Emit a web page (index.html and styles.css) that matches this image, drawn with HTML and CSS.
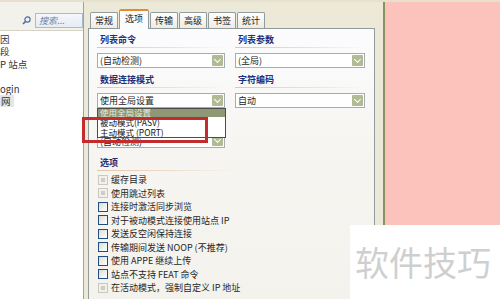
FILE: index.html
```html
<!DOCTYPE html>
<html>
<head>
<meta charset="utf-8">
<link rel="stylesheet" href="styles.css">
</head>
<body>
<div class="screen">
  <aside class="left">
    <div class="searchbar">
      <svg class="mag" width="9" height="9" viewBox="0 0 9 9"><circle cx="5.5" cy="3.5" r="2.6" fill="none" stroke="#4a6fa8" stroke-width="1.2"/><path d="M3.6 5.4 L1 8" stroke="#4a6fa8" stroke-width="1.6"/></svg>
      <div class="search">搜索...</div>
    </div>
    <ul class="tree">
      <li>因</li>
      <li>段</li>
      <li>P 站点</li>
      <li></li>
      <li>ogin</li>
      <li><span class="sel">网</span></li>
    </ul>
  </aside>
  <div class="split"></div>
  <main class="main">
    <div class="tabs">
      <div class="tab">常规</div>
      <div class="tab active">选项</div>
      <div class="tab">传输</div>
      <div class="tab">高级</div>
      <div class="tab">书签</div>
      <div class="tab">统计</div>
    </div>
    <div class="panel">
      <div class="grid">
        <div class="field">
          <h3>列表命令</h3>
          <div class="select">(自动检测)<span class="arrow"></span></div>
        </div>
        <div class="field">
          <h3>列表参数</h3>
          <div class="select">(全局)<span class="arrow"></span></div>
        </div>
        <div class="field">
          <h3>数据连接模式</h3>
          <div class="select">使用全局设置<span class="arrow"></span>
            <div class="droplist">
              <div class="opt hi">使用全局设置</div>
              <div class="opt">被动模式(PASV)</div>
              <div class="opt">主动模式 (PORT)</div>
            </div>
          </div>
        </div>
        <div class="field">
          <h3>字符编码</h3>
          <div class="select">自动<span class="arrow"></span></div>
        </div>
        <div class="field">
          <h3></h3>
          <div class="select low">(自动检测)<span class="arrow"></span></div>
        </div>
      </div>
      <h3 class="opts-title">选项</h3>
      <ul class="checks">
        <li class="dis"><span class="cb"></span>缓存目录</li>
        <li class="dis"><span class="cb"></span>使用跳过列表</li>
        <li><span class="cb"></span>连接时激活同步浏览</li>
        <li><span class="cb"></span>对于被动模式连接使用站点 IP</li>
        <li><span class="cb"></span>发送反空闲保持连接</li>
        <li><span class="cb"></span>传输期间发送 NOOP (不推荐)</li>
        <li><span class="cb"></span>使用 APPE 继续上传</li>
        <li><span class="cb"></span>站点不支持 FEAT 命令</li>
        <li class="dis"><span class="cb"></span>在活动模式，强制自定义 IP 地址</li>
      </ul>
    </div>
  </main>
  <div class="gap"></div>
  <div class="frame"></div>
  <div class="pink"></div>
</div>
<div class="annot"></div>
<div class="watermark">软件技巧</div>
</body>
</html>
```
FILE: styles.css
```css
* { box-sizing: border-box; }
html, body { margin: 0; padding: 0; }
body {
  width: 500px;
  height: 299px;
  overflow: hidden;
  position: relative;
  background: #fcc3bd;
  font-family: "Noto Sans CJK SC", "Liberation Sans", sans-serif;
  font-size: 9px;
  color: #222;
}
ul { list-style: none; margin: 0; padding: 0; }
h3 { margin: 0; }

.screen {
  display: flex;
  height: 299px;
  border-top: 2px solid #e7e0cc;
}

/* left pane */
.left {
  width: 84px;
  background: #fff;
  border-right: 1px solid #9aa3a6;
  overflow: hidden;
}
.searchbar {
  height: 29px;
  background: #f2f1ec;
  border-bottom: 1px solid #d6d3c6;
  display: flex;
  align-items: flex-start;
  padding-top: 11px;
  padding-left: 22px;
  gap: 4px;
}
.mag { margin-top: 3px; }
.search {
  width: 48px;
  height: 15px;
  border: 1px solid #a9bbd0;
  background: linear-gradient(#f4f7fb, #e6ecf3);
  color: #6a7ea0;
  font-style: italic;
  line-height: 13px;
  padding-left: 3px;
}
.tree { padding-top: 2px; }
.tree li {
  height: 12.4px;
  line-height: 12px;
  white-space: nowrap;
  font-size: 9.5px;
  color: #333;
}
.tree .sel { background: #e6e6e6; padding: 0 3px 0 1px; display: inline-block; line-height: 12px; }

.split { width: 4px; background: #ece9d8; }

/* main */
.main {
  width: 287px;
  background: #ece9d8;
  display: flex;
  flex-direction: column;
}
.tabs {
  display: flex;
  align-items: flex-end;
  height: 26px;
  padding-left: 2px;
  gap: 1px;
  position: relative;
  z-index: 1;
}
.tab {
  height: 16px;
  padding: 0 4px;
  border: 1px solid #919b9c;
  border-bottom: none;
  border-radius: 2px 2px 0 0;
  background: linear-gradient(#fefefe, #ecebe6);
  line-height: 15px;
  color: #222;
}
.tab.active {
  height: 20px;
  margin-bottom: -1px;
  padding: 0 5px;
  background: #fcfcfe;
  border-top: 2px solid #e68b2c;
  line-height: 16px;
}
.panel {
  flex: 1;
  border: 1px solid #919b9c;
  border-bottom: none;
  background: linear-gradient(#fcfcfe 0%, #f6f5f1 45%, #f3f2ed 100%);
  padding: 5px 9px 0 8px;
}
.grid {
  display: grid;
  grid-template-columns: 128px 130px;
  column-gap: 10px;
  row-gap: 6px;
}
h3 {
  font-size: 9px;
  font-weight: bold;
  color: #1e2f7c;
  height: 14px;
  line-height: 12px;
  padding-left: 3px;
  background: linear-gradient(to right, #e3c7a6, #efe2d2 60%, rgba(255,255,255,0)) left 13px / 100% 1px no-repeat;
}
.select {
  position: relative;
  margin-top: 5px;
  height: 15px;
  border: 1px solid #a5acb2;
  background: #fff;
  line-height: 13px;
  padding-left: 2px;
  white-space: nowrap;
}
.select.low { line-height: 15px; }
.arrow {
  position: absolute;
  right: 1px;
  top: 1px;
  width: 11px;
  height: 11px;
  background: #b0ba94;
  border-radius: 1px;
}
.arrow::after {
  content: "";
  position: absolute;
  left: 3px;
  top: 2px;
  width: 4px;
  height: 4px;
  border-right: 1.5px solid #fff;
  border-bottom: 1.5px solid #fff;
  transform: rotate(45deg);
}
.droplist {
  position: absolute;
  left: -1px;
  top: 14px;
  width: 129px;
  height: 30px;
  border: 1px solid #4c4c4c;
  background: #fff;
  z-index: 2;
  line-height: 10px;
}
.opt {
  height: 10px;
  line-height: 10px;
  padding-left: 2px;
  color: #111;
  white-space: nowrap;
  font-size: 8.5px;
}
.opt.hi {
  height: 8px;
  line-height: 6px;
  background: #8e9874;
  color: #e6e9dc;
  overflow: hidden;
}
.opts-title {
  margin-top: 9px;
  width: 143px;
}
.checks { margin-top: 2px; }
.checks li {
  height: 13.5px;
  display: flex;
  align-items: center;
  gap: 3px;
  padding-left: 1px;
  white-space: nowrap;
  color: #262626;
}
.cb {
  width: 10px;
  height: 10px;
  border: 1px solid #1f4f7e;
  background: linear-gradient(135deg, #dcdcd6, #fff);
  flex: none;
}
.dis .cb {
  border-color: #cbc9bc;
  background: #f1f0ea;
  position: relative;
}
.dis .cb::after {
  content: "";
  position: absolute;
  left: 2px; top: 2px;
  width: 4px; height: 4px;
  background: #cfcdc1;
}

.gap { width: 8px; background: #ece9d8; }
.frame { width: 2px; background: #86935f; }
.pink { flex: 1; background: #fcc3bd; }

/* overlays */
.annot {
  position: absolute;
  left: 82px;
  top: 117px;
  width: 126px;
  height: 26px;
  border: 3px solid #c32c2c;
  z-index: 5;
}
.watermark {
  position: absolute;
  right: 0;
  bottom: 0;
  width: 150px;
  height: 74px;
  background: #fff;
  color: #cfcfcf;
  font-size: 34px;
  line-height: 74px;
  padding-left: 5px;
  z-index: 6;
}
```
